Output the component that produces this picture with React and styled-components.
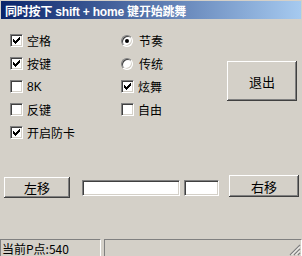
import React from 'react'
import styled, { createGlobalStyle } from 'styled-components'

const GlobalStyle = createGlobalStyle`
  html, body {
    margin: 0;
    padding: 0;
    background: #d4d0c8;
  }
  #root {
    width: 302px;
    height: 256px;
  }
`

const font = `"Noto Sans CJK SC", "Liberation Sans", sans-serif`

const Window = styled.div`
  width: 302px;
  height: 256px;
  background: #d4d0c8;
  display: flex;
  flex-direction: column;
  font-family: ${font};
  font-size: 12px;
  color: #000;
  overflow: hidden;
`

const TitleBar = styled.div`
  height: 18px;
  margin: 1px 1px 0;
  padding-left: 4px;
  display: flex;
  align-items: center;
  background: linear-gradient(to right, #0a246a, #a6caf0);
  color: #fff;
  font-family: "Liberation Sans", "Noto Sans CJK SC", sans-serif;
  font-weight: bold;
  font-size: 12px;
  letter-spacing: -0.2px;
  white-space: nowrap;
`

const Top = styled.div`
  display: flex;
  padding-top: 10px;
`

const Column = styled.div`
  display: flex;
  flex-direction: column;
  width: ${p => p.$width}px;
  padding-left: ${p => p.$pad || 0}px;
  box-sizing: border-box;
`

const Row = styled.label`
  height: 23px;
  display: flex;
  align-items: center;
  gap: ${p => p.$gap || 4}px;
  white-space: nowrap;
`

const Box = styled.span`
  width: 13px;
  height: 13px;
  box-sizing: border-box;
  background: #fff;
  border-top: 1px solid #808080;
  border-left: 1px solid #808080;
  border-bottom: 1px solid #fff;
  border-right: 1px solid #fff;
  box-shadow: inset 1px 1px #404040, inset -1px -1px #d4d0c8;
  position: relative;
  flex: none;

  svg {
    position: absolute;
    left: -1px;
    top: -1px;
  }
`

const Radio = styled.span`
  width: 12px;
  height: 12px;
  box-sizing: border-box;
  border-radius: 50%;
  background: #fff;
  border-top: 1px solid #808080;
  border-left: 1px solid #808080;
  border-bottom: 1px solid #fff;
  border-right: 1px solid #fff;
  box-shadow: inset 1px 1px #404040, inset -1px -1px #d4d0c8;
  display: flex;
  align-items: center;
  justify-content: center;
  flex: none;

  &::after {
    content: '';
    width: 4px;
    height: 4px;
    border-radius: 50%;
    background: ${p => (p.$on ? '#000' : 'transparent')};
  }
`

const Label = styled.span`
  line-height: 14px;
  font-family: ${p => (p.$latin ? '"Liberation Sans", sans-serif' : font)};
`

const Button = styled.div`
  width: ${p => p.$w}px;
  height: ${p => p.$h}px;
  margin-top: ${p => p.$top || 0}px;
  box-sizing: border-box;
  display: flex;
  align-items: center;
  justify-content: center;
  background: #d4d0c8;
  box-shadow: inset -1px -1px #404040, inset 1px 1px #fff,
    inset -2px -2px #808080, inset 2px 2px #d4d0c8;
  font-size: 13px;
  flex: none;
`

const Bottom = styled.div`
  display: flex;
  align-items: flex-start;
  margin-top: 31px;
  padding-left: 4px;
`

const Field = styled.div`
  width: ${p => p.$w}px;
  height: 16px;
  margin-top: 5px;
  margin-left: ${p => p.$left}px;
  box-sizing: border-box;
  background: #fff;
  border-top: 1px solid #808080;
  border-left: 1px solid #808080;
  border-bottom: 1px solid #fff;
  border-right: 1px solid #fff;
  box-shadow: inset 1px 1px #404040, inset -1px -1px #d4d0c8;
  flex: none;
`

const StatusBar = styled.div`
  margin-top: auto;
  height: 17px;
  display: flex;
  gap: 3px;
`

const Panel = styled.div`
  width: ${p => (p.$w ? `${p.$w}px` : 'auto')};
  flex: ${p => (p.$w ? 'none' : '1')};
  box-sizing: border-box;
  border-top: 1px solid #808080;
  border-left: 1px solid #808080;
  border-right: 1px solid #fff;
  padding-left: 1px;
  display: flex;
  align-items: center;
  position: relative;
  white-space: nowrap;
`

const Grip = styled.svg`
  position: absolute;
  right: 0;
  bottom: 0;
`

const Check = () => (
  <svg width="13" height="13" viewBox="0 0 13 13" shapeRendering="crispEdges">
    <path d="M3 5h1v1h1v1h1V6h1V5h1V4h1V3h1v3H9v1H8v1H7v1H6v1H5V9H4V8H3z" fill="#000" />
  </svg>
)

const CheckItem = ({ on, children, latin }) => (
  <Row>
    <Box>{on && <Check />}</Box>
    <Label $latin={latin}>{children}</Label>
  </Row>
)

const RadioItem = ({ on, children }) => (
  <Row $gap={6}>
    <Radio $on={on} />
    <Label>{children}</Label>
  </Row>
)

export default function App() {
  return (
    <>
      <GlobalStyle />
      <Window>
        <TitleBar>同时按下 shift + home 键开始跳舞</TitleBar>

        <Top>
          <Column $width={121} $pad={10}>
            <CheckItem on>空格</CheckItem>
            <CheckItem on>按键</CheckItem>
            <CheckItem latin>8K</CheckItem>
            <CheckItem>反键</CheckItem>
            <CheckItem on>开启防卡</CheckItem>
          </Column>
          <Column $width={106}>
            <RadioItem on>节奏</RadioItem>
            <RadioItem>传统</RadioItem>
            <CheckItem on>炫舞</CheckItem>
            <CheckItem>自由</CheckItem>
          </Column>
          <Button $w={70} $h={40} $top={32}>退出</Button>
        </Top>

        <Bottom>
          <Button $w={66} $h={21} $top={2}>左移</Button>
          <Field $w={98} $left={12} />
          <Field $w={35} $left={4} />
          <Button $w={70} $h={22} style={{ marginLeft: 10 }}>右移</Button>
        </Bottom>

        <StatusBar>
          <Panel $w={101}>当前P点:540</Panel>
          <Panel>
            <Grip width="12" height="12" viewBox="0 0 12 12">
              <path d="M11 1L1 11M11 5L5 11M11 9L9 11" stroke="#808080" strokeWidth="1.2" />
              <path d="M11 2.5L2.5 11M11 6.5L6.5 11M11 10.5L10.5 11" stroke="#fff" strokeWidth="1" />
            </Grip>
          </Panel>
        </StatusBar>
      </Window>
    </>
  )
}
